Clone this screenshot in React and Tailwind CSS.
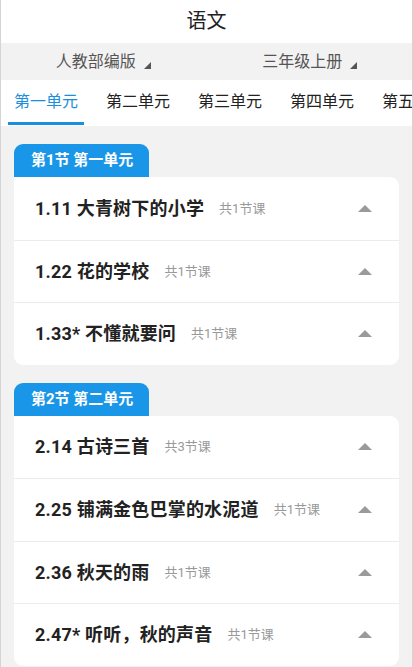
import React from "react";

const FONT = { fontFamily: 'Roboto, "Noto Sans CJK SC", "Noto Sans", sans-serif' };

const sections = [
  {
    tag: "第1节 第一单元",
    rows: [
      { title: "1.11 大青树下的小学", count: "共1节课" },
      { title: "1.22 花的学校", count: "共1节课" },
      { title: "1.33* 不懂就要问", count: "共1节课" },
    ],
  },
  {
    tag: "第2节 第二单元",
    rows: [
      { title: "2.14 古诗三首", count: "共3节课" },
      { title: "2.25 铺满金色巴掌的水泥道", count: "共1节课" },
      { title: "2.36 秋天的雨", count: "共1节课" },
      { title: "2.47* 听听，秋的声音", count: "共1节课" },
    ],
  },
];

const tabs = ["第一单元", "第二单元", "第三单元", "第四单元", "第五单元"];

const Corner = () => (
  <svg width="7" height="7" viewBox="0 0 7 7" className="ml-[8px] mt-[8px]">
    <polygon points="7,0 7,7 0,7" fill="#555" />
  </svg>
);

const Up = () => (
  <svg width="14" height="7" viewBox="0 0 14 7">
    <polygon points="7,0 14,7 0,7" fill="#9a9a9a" />
  </svg>
);

export default function App() {
  return (
    <div className="w-[413px] h-[667px] overflow-hidden bg-[#f2f2f2] border-x border-[#d4d4d4]" style={FONT}>
      {/* header */}
      <div className="h-[43px] bg-white flex items-center justify-center pb-[2px] text-[20px] text-[#222]">
        语文
      </div>

      {/* dropdowns */}
      <div className="h-[37px] bg-[#f2f2f2] flex text-[16px] text-[#555]">
        <div className="flex-1 flex items-center justify-center">
          <span>人教部编版</span>
          <Corner />
        </div>
        <div className="flex-1 flex items-center justify-center pl-[2px]">
          <span>三年级上册</span>
          <Corner />
        </div>
      </div>

      {/* tabs */}
      <div className="h-[46px] bg-white flex whitespace-nowrap overflow-hidden pl-[6px]">
        {tabs.map((t, i) => (
          <div key={t} className="relative w-[92px] shrink-0 flex items-center justify-start pl-[7px] pb-[2px] text-[16px]">
            <span className={i === 0 ? "text-[#1a8fdd]" : "text-[#222]"}>{t}</span>
            {i === 0 && <div className="absolute left-[1px] w-[76px] bottom-[1px] h-[3px] bg-[#1a8fdd]" />}
          </div>
        ))}
      </div>

      {/* sections */}
      <div className="px-[13px] pt-[18px] flex flex-col gap-[18px]">
        {sections.map((s) => (
          <div key={s.tag}>
            <div className="w-[135px] h-[33px] bg-[#1a96e8] rounded-t-[9px] flex items-center pl-[17px] text-white text-[15px] font-bold">
              {s.tag}
            </div>
            <div className="bg-white rounded-b-[9px] rounded-tr-[9px] w-[385px]">
              {s.rows.map((r, i) => (
                <div
                  key={r.title}
                  className={`h-[62.5px] flex items-center pl-[21px] pr-[27px] ${i > 0 ? "border-t border-[#ececec]" : ""}`}
                >
                  <span className="text-[18px] font-bold text-[#222] tracking-[0.2px]">{r.title}</span>
                  <span className="ml-[15px] text-[13px] text-[#999]">{r.count}</span>
                  <div className="ml-auto">
                    <Up />
                  </div>
                </div>
              ))}
            </div>
          </div>
        ))}
      </div>
    </div>
  );
}
